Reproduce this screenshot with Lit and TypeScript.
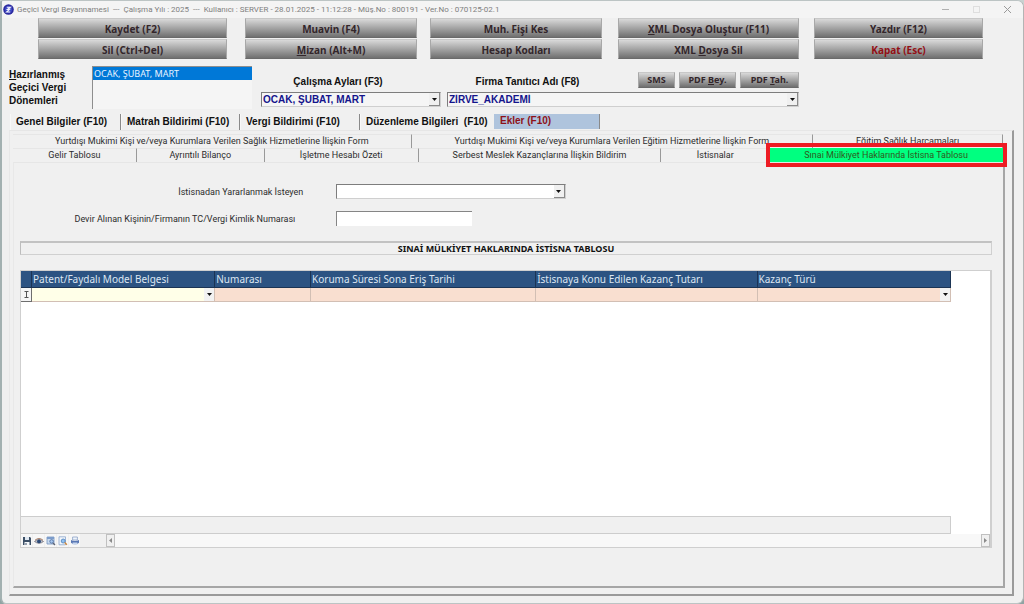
import { LitElement, html, css, svg, nothing } from "lit";
import { customElement, state } from "lit/decorators.js";
import { classMap } from "lit/directives/class-map.js";

interface Command {
  before?: string;
  key?: string;
  text: string;
  danger?: boolean;
}

const COMMANDS: Command[][] = [
  [{ text: "Kaydet (F2)" }, { text: "Sil (Ctrl+Del)" }],
  [{ text: "Muavin (F4)" }, { key: "M", text: "izan (Alt+M)" }],
  [{ text: "Muh. Fişi Kes" }, { text: "Hesap Kodları" }],
  [{ key: "X", text: "ML Dosya Oluştur (F11)" }, { before: "XML ", key: "D", text: "osya Sil" }],
  [{ text: "Yazdır (F12)" }, { text: "Kapat (Esc)", danger: true }],
];

const MAIN_TABS = [
  "Genel Bilgiler (F10)",
  "Matrah Bildirimi (F10)",
  "Vergi Bildirimi (F10)",
  "Düzenleme Bilgileri  (F10)",
  "Ekler (F10)",
];

const UPPER_TABS = [
  "Yurtdışı Mukimi Kişi ve/veya Kurumlara Verilen Sağlık Hizmetlerine İlişkin Form",
  "Yurtdışı Mukimi Kişi ve/veya Kurumlara Verilen Eğitim Hizmetlerine İlişkin Form",
  "Eğitim Sağlık Harcamaları",
];

const LOWER_TABS = [
  "Gelir Tablosu",
  "Ayrıntılı Bilanço",
  "İşletme Hesabı Özeti",
  "Serbest Meslek Kazançlarına İlişkin Bildirim",
  "İstisnalar",
  "Sınai Mülkiyet Haklarında İstisna Tablosu",
];

const COLUMNS = [
  { title: "Patent/Faydalı Model Belgesi", select: true, cls: "c-doc" },
  { title: "Numarası", select: false, cls: "c-no" },
  { title: "Koruma Süresi Sona Eriş Tarihi", select: false, cls: "c-date" },
  { title: "İstisnaya Konu Edilen Kazanç Tutarı", select: false, cls: "c-sum" },
  { title: "Kazanç Türü", select: true, cls: "c-kind" },
];

const TOOLS = [
  {
    label: "Kaydet",
    art: svg`<path d="M1 1h7l1 1v7H1z" fill="#3c4f66"/><path d="M3 1h4v3H3z" fill="#dfe8f2"/><path d="M2.5 6h5v3h-5z" fill="#f4f7fa"/><path d="M3.5 7h1v2h-1z" fill="#3c4f66"/>`,
  },
  {
    label: "Göster",
    art: svg`<path d="M.5 5.5Q5 1.5 9.5 5.5Q5 9 .5 5.5z" fill="#b9c2cf" stroke="#6b6570" stroke-width=".7"/><path d="M1 4.2Q5 .8 9 4.2" fill="none" stroke="#a9826c"/><circle cx="5" cy="5.4" r="1.9" fill="#2c4a78"/>`,
  },
  {
    label: "Sütunlar",
    art: svg`<path d="M1 1h7v7H1z" fill="#c9dbf0" stroke="#7593bd" stroke-width=".8"/><path d="M1 1h7v2H1z" fill="#7c9ccb"/><circle cx="5.6" cy="5.4" r="1.8" fill="#a6c6ee" stroke="#4b6a9c" stroke-width=".8"/><path d="M7 7l2 2" stroke="#5f6472" stroke-width="1.2"/>`,
  },
  {
    label: "Önizleme",
    art: svg`<path d="M1 .8h6.5v8H1z" fill="#f1f6fc" stroke="#8aa5cc" stroke-width=".8"/><circle cx="5.2" cy="5" r="2" fill="#8fc0f0" stroke="#4c7fb8" stroke-width=".8"/><path d="M6.7 6.6l2.2 2.2" stroke="#d08a3c" stroke-width="1.4"/>`,
  },
  {
    label: "Yazdır",
    art: svg`<path d="M2.6 1h4.8v3H2.6z" fill="#eef4fb" stroke="#7e97c0" stroke-width=".7"/><path d="M1 4q4 2 8 0v2.8q-4 3-8 0z" fill="#5877b4"/><path d="M2.6 6.4h4.8v2H2.6z" fill="#c6d6ee"/>`,
  },
];

@customElement("app-root")
export class AppRoot extends LitElement {
  static styles = css`
    :host {
      display: block;
      background: linear-gradient(#c8d2d1, #8fa3a3);
      color: #1c1c1c;
      font-family: "Noto Sans", "Open Sans", sans-serif;
      font-size: 9px;
    }
    * { box-sizing: border-box; }
    button, input, select {
      font: inherit;
      color: inherit;
      margin: 0;
      padding: 0;
      border: 0;
      border-radius: 0;
      background: none;
      appearance: none;
      min-width: 0;
      outline: none;
    }
    .window {
      display: flex;
      flex-direction: column;
      min-height: 100vh;
      background: #f0f0f0;
      border: 1px solid #bcc4c4;
      border-left: 2px solid #a3b1b1;
      border-right-color: #b4b4b4;
      border-radius: 3px 7px 7px 6px;
      overflow: hidden;
    }
    .titlebar {
      display: flex;
      align-items: center;
      height: 17px;
      padding: 0 10px 0 1px;
      background: #f4f4f4;
      color: #808080;
    }
    .logo { width: 11px; height: 11px; margin-right: 3px; flex: none; }
    .title { flex: 1; font-family: Roboto, sans-serif; white-space: pre; font-weight: 400; font-size: 8px; margin: 0; }
    .winbtns { display: flex; gap: 20px; }
    .winbtns button { width: 11px; height: 11px; display: block; }
    .winbtns svg { display: block; }

    .commands {
      display: grid;
      grid-template-columns: 189fr 18fr 172fr 13fr 172fr 16fr 181fr 15fr 169fr;
      padding: 0 40px 0 36px;
    }
    .group { display: grid; gap: 1px; }
    .group:nth-child(2) { grid-column: 3; }
    .group:nth-child(3) { grid-column: 5; }
    .group:nth-child(4) { grid-column: 7; }
    .group:nth-child(5) { grid-column: 9; }
    .cmd {
      height: 20px;
      font-weight: 700;
      font-size: 10px;
      line-height: 20px;
      color: #33262b;
      background: linear-gradient(#d9d9d9, #b4b4b4 35%, #707070);
      border: 1px solid #a8a8a8;
      border-top-color: #c8c8c8;
      border-bottom-color: #6a6a6a;
      white-space: nowrap;
      text-align: center;
    }
    .cmd.danger { color: #930f14; }
    .small { height: 16px; line-height: 14px; font-size: 9px; }

    .filters {
      display: grid;
      grid-template-columns: 90px 160fr 9px 180fr 6px 352fr 224fr;
      align-items: start;
      padding-top: 7px;
      font-family: "Liberation Sans", sans-serif;
      font-weight: 700;
      font-size: 10px;
      color: #101010;
    }
    .periods { padding: 2px 0 0 7px; line-height: 13px; }
    .periods span { display: block; }
    .list {
      height: 43px;
      border: solid #8e8e8e;
      border-width: 1px 0 0 1px;
      background: #f5f5f5;
      font-family: "Noto Sans", sans-serif;
      font-weight: 400;
      font-size: 9px;
      overflow: hidden;
    }
    .list option {
      display: block;
      height: 13px;
      min-height: 0;
      padding: 0 1px;
      line-height: 12px;
      background: #0078d7;
      color: #e8f3ff;
    }
    .filter { display: flex; flex-direction: column; padding: 6px 0 3px; }
    .f-months { grid-column: 4; }
    .f-firm { grid-column: 6; }
    .f-head { display: grid; height: 20px; align-items: start; }
    .f-months label, .f-firm label { line-height: 20px; }
    .f-months .f-head { justify-items: center; padding-right: 26px; }
    .f-firm .f-head { grid-template-columns: 1fr 161px; }
    .f-firm label { justify-self: center; padding-right: 30px; }
    .pdfs { display: grid; grid-template-columns: 37fr 57fr 59fr; gap: 4px; font-family: "Noto Sans", sans-serif; }
    .combo {
      display: grid;
      grid-template-columns: minmax(0, 1fr) 11px;
      height: 15px;
      border: 1px solid #cfcfcf;
      border-top-color: #7d7d7d;
      border-left-color: #7d7d7d;
      background: #f5f5f5;
    }
    .combo select { grid-area: 1 / 1 / 2 / 3; padding-left: 1px; width: 100%; height: 100%; line-height: 12px; color: #14148c; }
    .combo .drop { grid-area: 1 / 2; }
    .drop {
      display: grid;
      place-items: center;
      background: #f0f0f0;
      border: solid #8a8a8a;
      border-width: 0 1px 1px 0;
      pointer-events: none;
    }
    .combo.white { background: #fff; }

    .tabs { display: grid; grid-template-columns: 111fr 119fr 120fr 134fr 106fr 423fr; padding: 4px 0 0 8px; }
    .tabs button {
      height: 16px;
      padding-left: 5px;
      text-align: left;
      white-space: pre;
      font: 700 10px/16px "Liberation Sans", sans-serif;
      color: #101010;
      border-right: 1px solid #8a8a8a;
      border-left: 1px solid #f8f8f8;
    }
    .tabs button:nth-child(4) { border-right-color: transparent; }
    .tabs button.on { background: #afc4dd; color: #8e1219; line-height: 13px; height: 15px; padding-bottom: 2px; border-left-color: #afc4dd; }

    .outer {
      flex: 1;
      display: flex;
      flex-direction: column;
      margin: 0 9px 7px 7px;
      padding: 3px 7px 6px 3px;
      border: solid #9a9a9a;
      border-width: 1px 2px 2px 1px;
      border-top-color: #e6e6e6;
      border-left-color: #e8e8e8;
    }
    .upper, .lower { display: grid; padding-right: 2px; font-family: Roboto, sans-serif; }
    .upper { grid-template-columns: 399fr 402fr 190fr; }
    .lower { grid-template-columns: 124fr 128fr 154fr 243fr 109fr 233fr; }
    .sub { height: 14px; line-height: 13px; border: solid #e6e6e6; border-width: 1px 1px 0 0; border-right-color: #999; white-space: nowrap; text-align: center; color: #2c2c2c; }
    .lower .sub:nth-child(5) { border-right-color: transparent; }
    .active { position: relative; }
    .active .sub { width: 100%; background: #00ff80; color: #31591d; border-color: #00ff80; padding-bottom: 2px; line-height: 12px; }
    .frame { position: absolute; inset: -5px -4px; border: 4px solid #ed1c24; pointer-events: none; }

    .inner {
      flex: 1;
      display: flex;
      flex-direction: column;
      padding: 21px 11px 38px 6px;
      border: solid #a6a6a6;
      border-width: 1px 2px 2px 1px;
      border-top-color: #e6e6e6;
      border-left-color: #e8e8e8;
    }
    .form { display: grid; grid-template-columns: 283fr 229fr 393fr; column-gap: 33px; row-gap: 12px; align-items: center; color: #2c2c2c; font-family: Roboto, sans-serif; }
    .form label { text-align: right; white-space: nowrap; }
    .form label.far { padding-right: 8px; }
    .form .text { height: 15px; width: 59%; background: #fff; border: solid #858585; border-width: 1px 0 0 1px; }
    .heading {
      margin: 15px 0;
      height: 14px;
      border: 1px solid #d0d0d0;
      border-top: 2px solid #c2c2c2;
      border-left-color: #bdbdbd;
      font-size: 9px;
      font-weight: 700;
      line-height: 12px;
      text-align: center;
      color: #111;
    }
    .sheet { flex: 1; display: flex; flex-direction: column; background: #fff; border: 1px solid #cfcfcf; border-right-width: 2px; }
    table { width: 96%; table-layout: fixed; border-collapse: separate; border-spacing: 0; }
    th { height: 17px; padding: 0 1px; text-align: left; font-weight: 400; font-size: 10px; line-height: 15px; color: #dce6f2; background: #2c5382; border: solid #1b3454; border-width: 0 1px 1px 0; white-space: nowrap; }
    td { height: 14px; padding: 0; background: #f9dfd0; border: solid #d2bfb4; border-width: 0 1px 1px 0; }
    td.first { background: #ffffe8; }
    td.mark { background: #f5f5f5; border-color: #6e6e6e; }
    td.mark svg { display: block; margin: auto; }
    td input { display: block; width: 100%; height: 13px; }
    .cell { display: grid; grid-template-columns: minmax(0, 1fr) 10px; height: 13px; }
    .cell select { width: 100%; grid-area: 1 / 1 / 2 / 3; height: 13px; }
    .cell .drop { grid-area: 1 / 2; border: 0; background: #f2f2f2; }
    .c-mark { width: 11px; }
    .c-doc { width: 19.7%; }
    .c-no { width: 10.3%; }
    .c-date { width: 24.2%; }
    .c-sum { width: 23.8%; }
    .blank { flex: 1; }
    .summary { width: 96%; height: 18px; background: #f0f0f0; border: 1px solid #cdcdcd; border-left: 0; }
    .bottom { display: grid; grid-template-columns: 85px 1fr; height: 13px; background: #f0f0f0; }
    .tools { display: flex; gap: 1px; }
    .tools button { width: 11px; height: 13px; display: grid; place-items: center; background: #f7f7f7; }
    .scroll { display: flex; justify-content: space-between; background: #f8f8f8; }
    .scroll button { width: 9px; height: 13px; display: grid; place-items: center; background: #f0f0f0; border: 1px solid #c0c0c0; }
  `;

  @state() private mainTab = 4;

  private command(c: Command, small = false) {
    return html`<button type="button" class=${classMap({ cmd: true, danger: !!c.danger, small })}
      >${c.before ?? nothing}${c.key ? html`<u>${c.key}</u>` : nothing}${c.text}</button>`;
  }

  private arrow() {
    return html`<span class="drop"><svg width="5" height="3" viewBox="0 0 5 3"><path d="M0 0h5L2.5 3z" fill="#111" /></svg></span>`;
  }

  render() {
    return html`
      <main class="window">
        <header class="titlebar">
          <svg class="logo" viewBox="0 0 11 11"><circle cx="5.5" cy="5.5" r="5.3" fill="#2b2aa0" /><circle cx="5.5" cy="5.5" r="3.6" fill="#3d49c4" /><path d="M3.8 3.2h3.6L4.4 5.4h2.2L3.6 8h3.6" fill="none" stroke="#f2f3ff" stroke-width="1.1" /></svg>
          <h1 class="title">Geçici Vergi Beyannamesi  ---  Çalışma Yılı : 2025  ---  Kullanıcı : SERVER - 28.01.2025 - 11:12:28 - Müş.No : 800191 - Ver.No : 070125-02.1</h1>
          <div class="winbtns">
            <button type="button" aria-label="Simge durumuna küçült"><svg width="11" height="11"><path d="M2 5.5h7" stroke="#b0b0b0" /></svg></button>
            <button type="button" aria-label="Ekranı kapla"><svg width="11" height="11"><rect x="2.5" y="2.5" width="6" height="6" fill="none" stroke="#dedede" /></svg></button>
            <button type="button" aria-label="Kapat"><svg width="11" height="11"><path d="M2 2l7 7M9 2l-7 7" stroke="#9a9a9a" /></svg></button>
          </div>
        </header>

        <nav class="commands">
          ${COMMANDS.map((g) => html`<div class="group">${g.map((c) => this.command(c))}</div>`)}
        </nav>

        <section class="filters">
          <label class="periods" for="periods"><span><u>H</u>azırlanmış</span><span>Geçici Vergi</span><span>Dönemleri</span></label>
          <select class="list" id="periods" size="3"><option>OCAK, ŞUBAT, MART</option></select>
          <div class="filter f-months">
            <div class="f-head"><label for="months">Çalışma Ayları (F3)</label></div>
            <div class="combo"><select id="months"><option>OCAK, ŞUBAT, MART</option></select>${this.arrow()}</div>
          </div>
          <div class="filter f-firm">
            <div class="f-head">
              <label for="firm">Firma Tanıtıcı Adı (F8)</label>
              <div class="pdfs">
                ${this.command({ text: "SMS" }, true)}
                ${this.command({ before: "PDF ", key: "B", text: "ey." }, true)}
                ${this.command({ before: "PDF ", key: "T", text: "ah." }, true)}
              </div>
            </div>
            <div class="combo"><select id="firm"><option>ZİRVE_AKADEMİ</option></select>${this.arrow()}</div>
          </div>
        </section>

        <div class="tabs" role="tablist">
          ${MAIN_TABS.map((t, i) => html`<button type="button" role="tab" class=${classMap({ on: i === this.mainTab })}
            aria-selected=${i === this.mainTab} @click=${() => (this.mainTab = i)}>${t}</button>`)}
        </div>

        <section class="outer">
          <div class="upper" role="tablist">
            ${UPPER_TABS.map((t) => html`<button type="button" role="tab" class="sub">${t}</button>`)}
          </div>
          <div class="lower" role="tablist">
            ${LOWER_TABS.map((t, i) => i === LOWER_TABS.length - 1
              ? html`<div class="active"><button type="button" role="tab" aria-selected="true" class="sub">${t}</button><div class="frame"></div></div>`
              : html`<button type="button" role="tab" class="sub">${t}</button>`)}
          </div>

          <div class="inner">
            <div class="form">
              <label for="who">İstisnadan Yararlanmak İsteyen</label>
              <div class="combo white"><select id="who"><option></option></select>${this.arrow()}</div>
              <span></span>
              <label class="far" for="taxno">Devir Alınan Kişinin/Firmanın TC/Vergi Kimlik Numarası</label>
              <input class="text" id="taxno" type="text" />
            </div>

            <h2 class="heading">SINAİ MÜLKİYET HAKLARINDA İSTİSNA TABLOSU</h2>

            <div class="sheet">
              <table>
                <colgroup><col class="c-mark" />${COLUMNS.map((c) => html`<col class=${c.cls} />`)}</colgroup>
                <thead><tr><th></th>${COLUMNS.map((c) => html`<th scope="col">${c.title}</th>`)}</tr></thead>
                <tbody>
                  <tr>
                    <td class="mark"><svg width="5" height="7" viewBox="0 0 5 7"><path d="M.5 .5h4M.5 6.5h4M2.5 .5v6" stroke="#555" /></svg></td>
                    ${COLUMNS.map((c, i) => html`<td class=${classMap({ first: i === 0 })}>${c.select
                      ? html`<div class="cell"><select aria-label=${c.title}><option></option></select>${this.arrow()}</div>`
                      : html`<input type="text" aria-label=${c.title} />`}</td>`)}
                  </tr>
                </tbody>
              </table>
              <div class="blank"></div>
              <div class="summary"></div>
              <div class="bottom">
                <div class="tools">
                  ${TOOLS.map((t) => html`<button type="button" aria-label=${t.label}><svg width="10" height="10" viewBox="0 0 10 10">${t.art}</svg></button>`)}
                </div>
                <div class="scroll">
                  <button type="button" aria-label="Sola kaydır"><svg width="3" height="5"><path d="M3 0v5L0 2.5z" fill="#8a8a8a" /></svg></button>
                  <button type="button" aria-label="Sağa kaydır"><svg width="3" height="5"><path d="M0 0v5l3-2.5z" fill="#8a8a8a" /></svg></button>
                </div>
              </div>
            </div>
          </div>
        </section>
      </main>
    `;
  }
}
